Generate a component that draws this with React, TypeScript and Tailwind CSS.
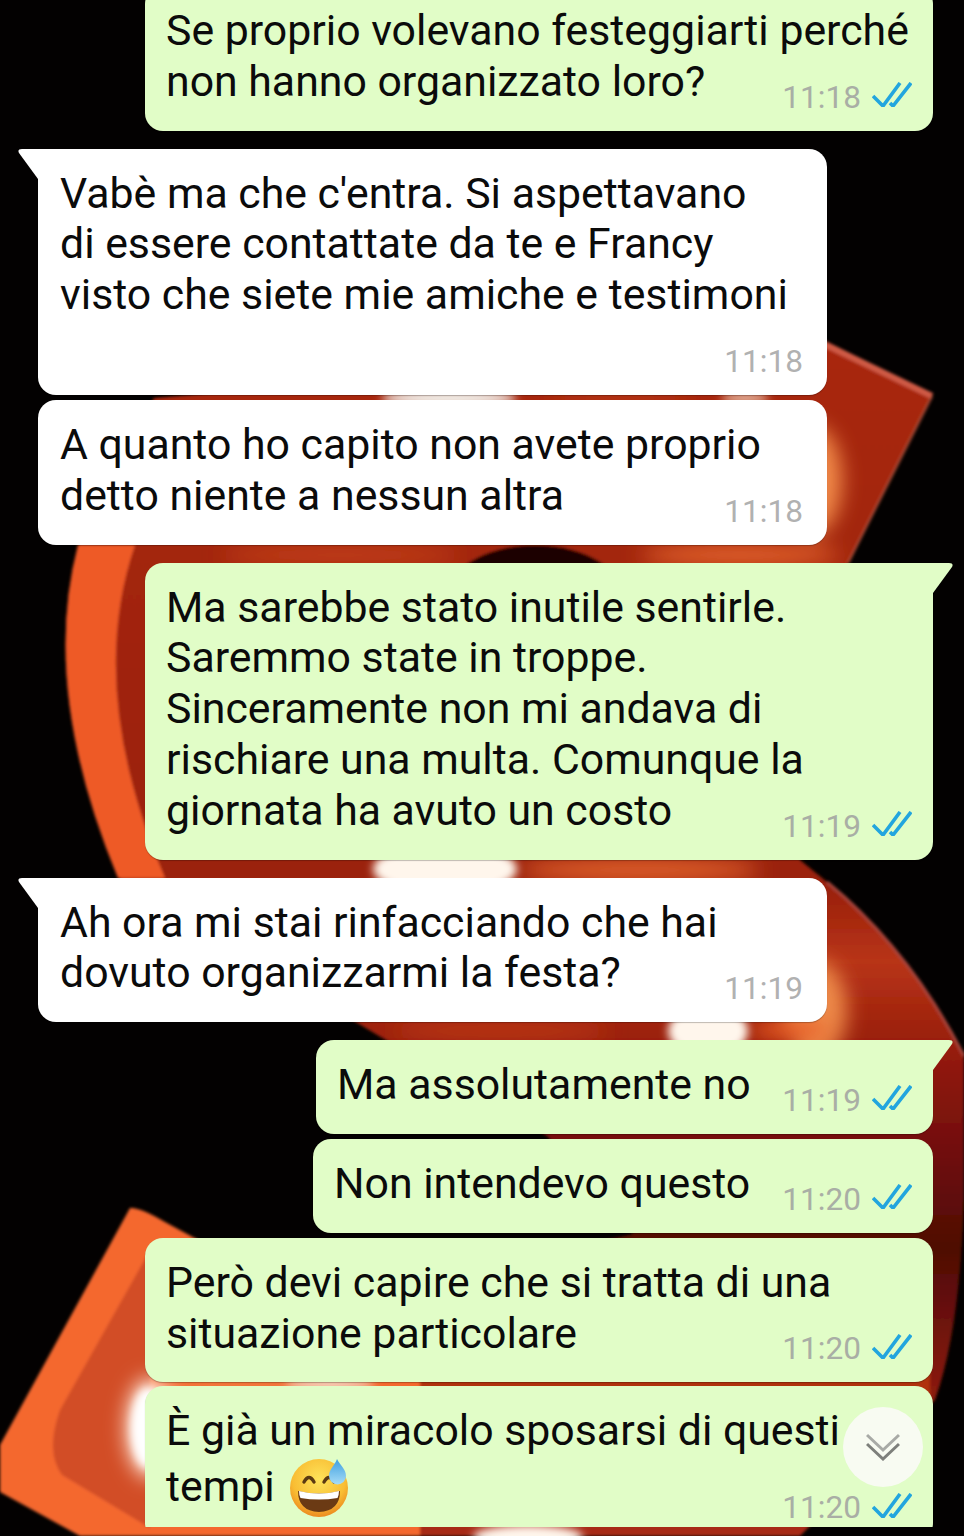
import type { ReactNode } from 'react'

type Msg = {
  side: 'in' | 'out'
  lines: ReactNode[]
  time: string
  box: string
  tail?: boolean
  timeBelow?: boolean
}

const Emoji = () => (
  <svg viewBox="0 0 60 60" className="ml-[14px] h-[60px] w-[60px] shrink-0">
    <defs>
      <radialGradient id="face" cx="50%" cy="35%" r="65%">
        <stop offset="0%" stopColor="#fde35a" />
        <stop offset="70%" stopColor="#f9bd33" />
        <stop offset="100%" stopColor="#ec8a1f" />
      </radialGradient>
      <linearGradient id="drop" x1="0" y1="0" x2="0" y2="1">
        <stop offset="0%" stopColor="#3f9fe0" />
        <stop offset="100%" stopColor="#a6dcf7" />
      </linearGradient>
    </defs>
    <circle cx="30" cy="31" r="29" fill="url(#face)" />
    <path d="M15 25q5-9 10 0M35 25q5-9 10 0" fill="none" stroke="#5b3a12" strokeWidth="3.4" strokeLinecap="round" />
    <path d="M9 34q21 5 42 0q0 20-21 21q-21-1-21-21z" fill="#6b3a14" />
    <path d="M10 34q20 5 40 0q0 4-1.500 7q-18.500 3-37 0q-1.500-3-1.500-7z" fill="#fff" />
    <path d="M48 2c3 6 9 10 9 17a8.500 8.500 0 0 1-17 0c0-7 6-11 8-17z" fill="url(#drop)" />
  </svg>
)

const messages: Msg[] = [
  {
    side: 'out',
    lines: ['Se proprio volevano festeggiarti perché', 'non hanno organizzato loro?'],
    time: '11:18',
    box: '-mt-[14px] w-[788px]',
  },
  {
    side: 'in',
    lines: ["Vabè ma che c'entra. Si aspettavano", 'di essere contattate da te e Francy', 'visto che siete mie amiche e testimoni'],
    time: '11:18',
    box: 'mt-[18px] w-[789px]',
    tail: true,
    timeBelow: true,
  },
  {
    side: 'in',
    lines: ['A quanto ho capito non avete proprio', 'detto niente a nessun altra'],
    time: '11:18',
    box: 'mt-[5px] w-[789px]',
  },
  {
    side: 'out',
    lines: [
      'Ma sarebbe stato inutile sentirle.',
      'Saremmo state in troppe.',
      'Sinceramente non mi andava di',
      'rischiare una multa. Comunque la',
      'giornata ha avuto un costo',
    ],
    time: '11:19',
    box: 'mt-[18px] w-[788px]',
    tail: true,
  },
  {
    side: 'in',
    lines: ['Ah ora mi stai rinfacciando che hai', 'dovuto organizzarmi la festa?'],
    time: '11:19',
    box: 'mt-[18px] w-[789px]',
    tail: true,
  },
  {
    side: 'out',
    lines: ['Ma assolutamente no'],
    time: '11:19',
    box: 'mt-[18px] w-[617px]',
    tail: true,
  },
  {
    side: 'out',
    lines: ['Non intendevo questo'],
    time: '11:20',
    box: 'mt-[5px] w-[620px]',
  },
  {
    side: 'out',
    lines: ['Però devi capire che si tratta di una', 'situazione particolare'],
    time: '11:20',
    box: 'mt-[5px] w-[788px]',
  },
  {
    side: 'out',
    lines: [
      'È già un miracolo sposarsi di questi',
      <span key="last" className="flex h-[61px] items-center">
        tempi
        <Emoji />
      </span>,
    ],
    time: '11:20',
    box: 'mt-[4px] w-[788px] shrink-0',
  },
]

const Ticks = () => (
  <svg viewBox="0 0 40 25" className="mb-[6px] ml-[11px] h-[25px] w-[40px]" fill="none" stroke="#22a5de" strokeWidth="3.600">
    <path d="M1 14l10 10L28 1" />
    <path d="M18 21l3 3L39 1" />
  </svg>
)

function Bubble({ msg }: { msg: Msg }) {
  const out = msg.side === 'out'
  return (
    <div
      className={`relative shrink-0 pb-4 pt-[19px] shadow-[0_1px_1px_rgba(0,0,0,0.25)] ${msg.box} ${
        out ? 'self-end bg-[#e1fdc7] pl-[21px] pr-[21px]' : 'self-start bg-white pl-[22px] pr-[24px]'
      } ${msg.tail ? (out ? 'rounded-[18px] rounded-tr-none' : 'rounded-[18px] rounded-tl-none') : 'rounded-[18px]'}`}
    >
      {msg.tail && out && (
        <svg viewBox="0 0 20 30" className="absolute left-full top-0 h-[30px] w-[20px]" fill="#e1fdc7">
          <path d="M0 0H16Q21 0 19 4L0 30Z" />
        </svg>
      )}
      {msg.tail && !out && (
        <svg viewBox="0 0 20 30" className="absolute right-full top-0 h-[30px] w-[20px]" fill="#fff">
          <path d="M20 0H4Q-1 0 1 4L20 30Z" />
        </svg>
      )}
      <div className={msg.timeBelow ? 'flex flex-col' : 'grid'}>
        <div
          className={`col-start-1 row-start-1 whitespace-nowrap text-[42.8px] leading-[50.8px] text-[#0b0b0b] ${
            msg.timeBelow ? 'mb-[24px]' : 'mb-2'
          }`}
        >
          {msg.lines.map((line, i) => (
            <div key={i}>{line}</div>
          ))}
        </div>
        <div
          className={`col-start-1 row-start-1 -mb-px flex items-center self-end justify-self-end text-[31.6px] leading-[36px] ${
            out ? 'text-[#a9aea5]' : 'text-[#b1b1b1]'
          }`}
        >
          {msg.time}
          {out && <Ticks />}
        </div>
      </div>
    </div>
  )
}

// the chat wallpaper: only the slivers between the bubbles ever show
const Wallpaper = () => (
  <svg viewBox="0 0 964 1536" className="absolute inset-0 h-full w-full">
    <defs>
      <filter id="soft"><feGaussianBlur stdDeviation="1.800" /></filter>
      <filter id="mid"><feGaussianBlur stdDeviation="4" /></filter>
      <filter id="glow"><feGaussianBlur stdDeviation="10" /></filter>
      <linearGradient id="body" x1="0" y1="338" x2="0" y2="1536" gradientUnits="userSpaceOnUse">
        <stop offset="0" stopColor="#a82810" />
        <stop offset="0.46" stopColor="#9a200e" />
        <stop offset="0.52" stopColor="#b83414" />
        <stop offset="0.62" stopColor="#8a140b" />
        <stop offset="0.76" stopColor="#4e0905" />
        <stop offset="0.88" stopColor="#8a1a0c" />
        <stop offset="1" stopColor="#a82c12" />
      </linearGradient>
    </defs>
    <rect width="964" height="1536" fill="#030101" />
    <g filter="url(#soft)">
      <path
        d="M154 398L820 338L932 395L848 563L800 860L827 882Q910 950 964 1056V1200Q960 1330 935 1400L800 1536H400L145 1340L633 1234L547 1136L369 1030L118 878Q40 690 78 545Z"
        fill="url(#body)"
      />
      <path d="M78 545Q40 690 118 878H165Q85 690 135 545Z" fill="#ee5a28" />
      <path d="M130 1208Q140 1207 165 1222L420 1360V1536H80L0 1492V1445Z" fill="#f4682f" />
      <path d="M150 1250L60 1410Q45 1452 62 1475L150 1528Z" fill="#d24d27" />
      <path d="M420 1370H930V1400H420Z" fill="#b0300f" />
      <ellipse cx="535" cy="600" rx="90" ry="55" fill="#1a0503" />
      <path d="M820 342L932 396" stroke="#cf5a45" strokeWidth="6" fill="none" />
      <path d="M932 396L848 563" stroke="#c45a40" strokeWidth="3" fill="none" opacity="0.6" />
      <path d="M827 882Q910 950 964 1056" stroke="#a8453a" strokeWidth="3" fill="none" />
    </g>
    <g filter="url(#glow)">
      <ellipse cx="812" cy="480" rx="30" ry="55" fill="#f28a48" />
      <ellipse cx="815" cy="1010" rx="32" ry="50" fill="#ee8a48" />
      <ellipse cx="340" cy="555" rx="120" ry="8" fill="#c9441e" />
      <ellipse cx="740" cy="555" rx="100" ry="10" fill="#e8682e" />
      <ellipse cx="620" cy="398" rx="70" ry="4" fill="#c4481f" />
      <ellipse cx="640" cy="870" rx="120" ry="12" fill="#e0602a" />
      <ellipse cx="790" cy="1030" rx="40" ry="10" fill="#e65a22" />
      <ellipse cx="500" cy="1031" rx="110" ry="8" fill="#c03a18" />
      <ellipse cx="250" cy="1384" rx="90" ry="5" fill="#ef8a50" />
      <ellipse cx="150" cy="1428" rx="24" ry="50" fill="#ffe8d8" />
    </g>
    <g filter="url(#mid)">
      <ellipse cx="449" cy="398" rx="68" ry="8" fill="#f2f0ea" />
      <ellipse cx="745" cy="398" rx="24" ry="5" fill="#eac0a8" />
      <ellipse cx="445" cy="869" rx="72" ry="26" fill="#fff6ec" />
      <ellipse cx="708" cy="1031" rx="40" ry="26" fill="#fff6ec" />
      <ellipse cx="330" cy="1384" rx="45" ry="5" fill="#f6e2d2" />
      <ellipse cx="528" cy="1537" rx="55" ry="12" fill="#fff6ec" />
      <ellipse cx="148" cy="1428" rx="17" ry="40" fill="#fff" />
    </g>
  </svg>
)

export default function App() {
  return (
    <div className="relative h-[1536px] w-[964px] overflow-hidden bg-black font-['Roboto',sans-serif]">
      <Wallpaper />
      <div className="relative flex h-[1527px] flex-col overflow-hidden pl-[38px] pr-[31px]">
        {messages.map((msg, i) => (
          <Bubble key={i} msg={msg} />
        ))}
      </div>
      {/* scroll to bottom */}
      <div className="absolute left-[843px] top-[1407px] flex h-20 w-20 items-center justify-center rounded-full bg-[#f8fbf2]">
        <svg viewBox="0 0 34 28" className="h-7 w-[34px]" fill="none" strokeWidth="3">
          <path d="M1 2l16 15L33 2" stroke="#a8aaa6" />
          <path d="M1 11l16 15L33 11" stroke="#7d7f7b" />
        </svg>
      </div>
    </div>
  )
}
